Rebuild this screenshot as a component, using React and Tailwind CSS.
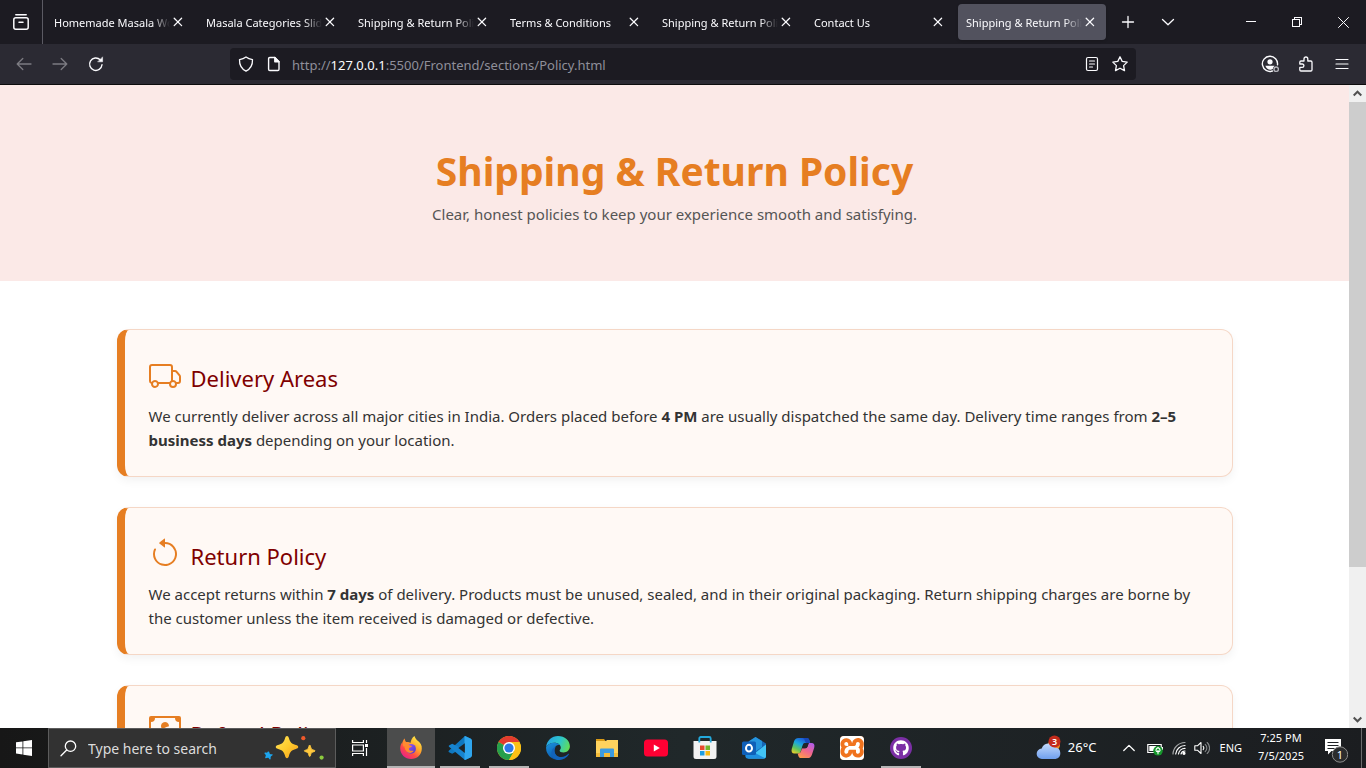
import React from "react";
import { BsTruck, BsArrowCounterclockwise, BsCashCoin } from "react-icons/bs";
import { FaGithub } from "react-icons/fa";
import { SiXampp } from "react-icons/si";

const line = { fill: "none", stroke: "currentColor", strokeLinecap: "round", strokeLinejoin: "round" };

function Icon({ size = 16, box = 16, width = 1.3, children, ...rest }) {
  return (
    <svg width={size} height={size} viewBox={`0 0 ${box} ${box}`} aria-hidden="true" strokeWidth={width} {...line} {...rest}>
      {children}
    </svg>
  );
}

/* ---------- Browser ---------- */

const tabs = [
  "Homemade Masala Wo",
  "Masala Categories Slider",
  "Shipping & Return Policy",
  "Terms & Conditions",
  "Shipping & Return Policy",
  "Contact Us",
  "Shipping & Return Policy",
];

function Tab({ title, active }) {
  return (
    <div className={`flex h-9 w-[148px] shrink-0 items-center rounded pl-2 pr-2 ${active ? "bg-[#52525e] shadow" : ""}`}>
      <a
        href="#tab"
        className="block w-[116px] overflow-hidden whitespace-nowrap pt-0.5 text-[11px] leading-4 text-[#fbfbfe] [mask-image:linear-gradient(to_right,black_calc(100%_-_18px),transparent)]"
      >
        {title}
      </a>
      <button type="button" aria-label={`Close ${title}`} className="flex size-4 items-center justify-center text-[#fbfbfe]">
        <Icon size={10} box={10} width={1.3}><path d="M1.2 1.2l7.4 7.4M8.6 1.2L1.2 8.6" /></Icon>
      </button>
    </div>
  );
}

function TabBar() {
  return (
    <div className="flex h-11 items-center bg-[#1c1b22] text-[#fbfbfe]">
      <button type="button" aria-label="Firefox View" className="flex h-11 w-[42px] shrink-0 items-center justify-center">
        <Icon size={18} box={18} width={1.5}>
          <path d="M3.8 1.8h10.4" />
          <rect x="1.8" y="4.8" width="14.4" height="11.4" rx="2" />
          <path d="M7 9.2h4" />
        </Icon>
      </button>
      <div className="h-11 w-px bg-[#5b5a63]" />
      <nav aria-label="Tabs" className="ml-[3px] flex gap-1">
        {tabs.map((t, i) => <Tab key={i} title={t} active={i === 6} />)}
      </nav>
      <button type="button" aria-label="New tab" className="ml-1.5 flex size-8 shrink-0 items-center justify-center">
        <Icon width={1.3}><path d="M8 2.5v11M2.5 8h11" /></Icon>
      </button>
      <button type="button" aria-label="List all tabs" className="ml-2 flex size-8 shrink-0 items-center justify-center">
        <Icon width={1.3}><path d="M2.5 5.5L8 10.7l5.5-5.2" /></Icon>
      </button>
      <div className="ml-auto flex">
        <button type="button" aria-label="Minimize" className="flex h-11 w-[46px] items-center justify-center">
          <Icon size={10} box={10} width={1} shapeRendering="crispEdges"><path d="M0 4.5h10" /></Icon>
        </button>
        <button type="button" aria-label="Restore" className="flex h-11 w-[46px] items-center justify-center">
          <Icon size={10} box={10} width={1} shapeRendering="crispEdges"><path d="M.5 2.5h7v7h-7zM2.5 2V.5h7v7H8" /></Icon>
        </button>
        <button type="button" aria-label="Close window" className="flex h-11 w-[46px] items-center justify-center">
          <Icon size={11} box={11} width={1}><path d="M.5.5l10 10M10.5.5l-10 10" /></Icon>
        </button>
      </div>
    </div>
  );
}

function ToolButton({ label, dim, children }) {
  return (
    <button type="button" aria-label={label} className={`flex size-8 shrink-0 items-center justify-center ${dim ? "text-[#7c7b82]" : "text-[#fbfbfe]"}`}>
      {children}
    </button>
  );
}

function Toolbar() {
  return (
    <div className="flex h-[41px] items-center border-b border-[#0c0c0d] bg-[#2b2a33] px-2">
      <div className="flex gap-1">
        <ToolButton label="Back" dim><Icon><path d="M15 8H1.2M6.8 2.5L1.2 8l5.6 5.5" /></Icon></ToolButton>
        <ToolButton label="Forward" dim><Icon><path d="M1 8h13.8M9.2 2.5L14.8 8l-5.6 5.5" /></Icon></ToolButton>
        <ToolButton label="Reload">
          <Icon width={1.4}>
            <path d="M14 8.8A6.2 6.2 0 1 1 12.2 3.8" />
            <path d="M14.6 1.2v4.6H10z" fill="currentColor" strokeWidth=".5" />
          </Icon>
        </ToolButton>
      </div>
      <div className="mx-[118px] flex h-8 min-w-0 flex-1 items-center rounded bg-[#1c1b22] text-[#fbfbfe]">
        <button type="button" aria-label="Tracking protection" className="ml-2 flex w-4 justify-center">
          <Icon width={1.3}><path d="M8 1C6 2.6 3.8 3.3 1.5 3.6 1.3 9 3.5 13 8 15.2c4.5-2.2 6.7-6.2 6.5-11.6C12.2 3.3 10 2.6 8 1z" /></Icon>
        </button>
        <button type="button" aria-label="Site information" className="ml-3 flex w-4 justify-center">
          <Icon width={1.4}>
            <path d="M3.8 1.5h5l4.2 4.2v7.6a1.2 1.2 0 0 1-1.2 1.2H3.8a1.2 1.2 0 0 1-1.2-1.2V2.7a1.2 1.2 0 0 1 1.2-1.2z" />
            <path d="M8.8 1.5v4.2H13z" fill="currentColor" />
          </Icon>
        </button>
        <a href="#address" className="ml-2.5 min-w-0 flex-1 truncate pt-0.5 text-[13px] leading-5 text-[#8f8f9a]">
          http://<span className="text-[#fbfbfe]">127.0.0.1</span>:5500/Frontend/sections/Policy.html
        </a>
        <button type="button" aria-label="Reader view" className="mr-3 flex w-4 justify-center">
          <Icon width={1.2}>
            <rect x="2.5" y="1.5" width="11" height="13" rx="1.5" />
            <path d="M5.5 5h5M5.5 8h5M5.5 11h3" />
          </Icon>
        </button>
        <button type="button" aria-label="Bookmark" className="mr-2 flex w-4 justify-center">
          <Icon width={1.3}><path d="M8 .8l2.2 4.6 5 .7-3.6 3.5.9 5L8 12.200l-4.500 2.400.9-5L.8 6.100l5-.7z" /></Icon>
        </button>
      </div>
      <div className="flex gap-1">
        <ToolButton label="Account">
          <Icon size={18} box={18} width={1.4}>
            <path d="M11.5 16A7.6 7.6 0 1 1 16.5 9.800" />
            <circle cx="9" cy="6.8" r="2.6" fill="currentColor" stroke="none" />
            <path d="M4.3 10.7h9.2c-.5 1-1.600 1.500-1.700 3.300-2.500 1.500-6 .8-7.500-3.300z" fill="currentColor" stroke="none" />
            <circle cx="15.2" cy="14.2" r="2.200" className="text-[#b4b4bb]" />
          </Icon>
        </ToolButton>
        <ToolButton label="Extensions">
          <Icon width={1.3}><path d="M6 5V2.900a1.900 1.900 0 0 1 3.800 0V5h3a1.200 1.200 0 0 1 1.200 1.200v7.600a1.200 1.200 0 0 1-1.200 1.200H3a1.200 1.200 0 0 1-1.200-1.200v-2.400h2.400a1.700 1.700 0 0 0 0-3.400H1.800V6.200A1.200 1.200 0 0 1 3 5z" /></Icon>
        </ToolButton>
        <ToolButton label="Menu"><Icon width={1.2}><path d="M2 3.5h12M2 8h12M2 12.5h12" /></Icon></ToolButton>
      </div>
    </div>
  );
}

/* ---------- Page ---------- */

function PolicyCard({ icon: Glyph, title, children }) {
  return (
    <section className="rounded-xl border border-l-8 border-[#f5d7c6] border-l-[#e67e22] bg-[#fff9f5] p-6 shadow-[0_4px_10px_rgba(0,0,0,0.05)]">
      <h2 className="mb-2 flex h-[42px] items-end gap-2.5 pb-1 text-[22px] leading-[27px] text-[#800000]">
        <Glyph className="size-8 shrink-0 text-[#e67e22]" aria-hidden="true" />
        {title}
      </h2>
      <p className="text-[15px] leading-6 text-[#333]">{children}</p>
    </section>
  );
}

function PolicyPage() {
  return (
    <main className="min-w-0 flex-1 overflow-hidden bg-white">
      <header className="bg-[#fbe9e7] pb-[55px] pt-[63px] text-center">
        <h1 className="text-[39px] font-bold leading-[46px] text-[#e67e22]">Shipping &amp; Return Policy</h1>
        <p className="mt-2 text-[15px] leading-6 text-[#555]">Clear, honest policies to keep your experience smooth and satisfying.</p>
      </header>
      <div className="mx-auto flex max-w-[1140px] flex-col gap-[30px] px-3 py-12">
        <PolicyCard icon={BsTruck} title="Delivery Areas">
          We currently deliver across all major cities in India. Orders placed before <strong>4 PM</strong> are usually dispatched the same day. Delivery time ranges from <strong>2–5 business days</strong> depending on your location.
        </PolicyCard>
        <PolicyCard icon={BsArrowCounterclockwise} title="Return Policy">
          We accept returns within <strong>7 days</strong> of delivery. Products must be unused, sealed, and in their original packaging. Return shipping charges are borne by the customer unless the item received is damaged or defective.
        </PolicyCard>
        <PolicyCard icon={BsCashCoin} title="Refund Policy" />
      </div>
    </main>
  );
}

function Scrollbar() {
  return (
    <div className="flex w-[17px] shrink-0 flex-col bg-[#f0f0f0] text-[#505050]">
      <button type="button" aria-label="Scroll up" className="flex h-[17px] items-center justify-center">
        <Icon size={9} box={9} width={2} strokeLinecap="butt" strokeLinejoin="miter"><path d="M.7 6.5l3.8-3.8 3.8 3.8" /></Icon>
      </button>
      <div className="flex flex-1 flex-col">
        <div className="flex-[465] bg-[#cdcdcd]" />
        <div className="flex-[144]" />
      </div>
      <button type="button" aria-label="Scroll down" className="flex h-[17px] items-center justify-center">
        <Icon size={9} box={9} width={2} strokeLinecap="butt" strokeLinejoin="miter"><path d="M.7 2.5l3.8 3.8 3.8-3.8" /></Icon>
      </button>
    </div>
  );
}

/* ---------- Taskbar ---------- */

function Art({ children, size = 24 }) {
  return <svg width={size} height={size} viewBox="0 0 24 24" aria-hidden="true">{children}</svg>;
}

const Firefox = () => (
  <Art>
    <defs>
      <linearGradient id="fxBody" x1=".85" y1=".05" x2=".2" y2=".95"><stop offset="0" stopColor="#fff04a" /><stop offset=".4" stopColor="#ffa72b" /><stop offset=".7" stopColor="#ff4a45" /><stop offset="1" stopColor="#e8208a" /></linearGradient>
      <linearGradient id="fxGlobe" x1="0" y1="0" x2="1" y2="1"><stop offset="0" stopColor="#a158ff" /><stop offset="1" stopColor="#4a3cc4" /></linearGradient>
    </defs>
    <path d="M15.5 0c.6 1.800 1.300 2.900 2.600 4.200 3.200 2.300 5 5 4.700 8.500C22.600 19 18 23 12.200 23 6 23 1.200 18.500 1.200 12.300c0-2.700 1-4.900 2.300-6.400l.3 2C4.300 6 4.600 3.800 5.400 2.600c0 1.600.6 2.900 1.400 3.500 1.500-.4 3-.3 4.600.9.600-2.700 1.700-5.500 4.100-7z" fill="url(#fxBody)" />
    <circle cx="12" cy="12.8" r="4.9" fill="url(#fxGlobe)" />
    <path d="M5.400 8.800c2-1 4.400-.6 5.400.6 1 .1 1.900.3 2.300.7-.5 1.300-2 1.300-2.800 2-.7.7-.5 1.900.6 2.400 1.300.6 2.500-.2 3.800.3-1 1.900-3.400 2.600-5.500 1.700C6.500 15.200 5 12 5.400 8.800z" fill="#ff8a2c" />
    <path d="M3.500 6L5.400 2.600l1.400 3.500 4.100.7-2 2.700-4.600 1z" fill="#ff8a32" />
  </Art>
);

const VsCode = () => (
  <Art>
    <path d="M17 0l5.900 2.800V7L4.200 17.700 1 16.200c-.7-.6-.6-1.200 0-1.700z" fill="#0f78c0" />
    <path d="M1 9.500l3.200-1.700L22.900 17v4.200L17 24 1 10.700c-.4-.4-.4-.8 0-1.200z" fill="#1784cf" />
    <path d="M17 0l5.900 2.800q1.100.5 1.100 1.600v15.200q0 1.100-1.100 1.600L17 24c-.8-.4-.5-.5-.5-1.200V1.200C16.500.5 16.300.3 17 0z" fill="#2fa6ee" />
    <path d="M16.800 7.200v9.700L10.400 12z" fill="#1f2325" />
  </Art>
);

const Chrome = () => (
  <Art>
    <circle cx="12" cy="12" r="12" fill="#fbc116" />
    <path d="M12 12L1.600 6A12 12 0 0 1 22.400 6H12z" fill="#e33b2e" />
    <path d="M12 12L1.600 6A12 12 0 0 0 12 24l5.200-9z" fill="#269f4c" />
    <path d="M12 6h10.400A12 12 0 0 1 12 24l5.200-9z" fill="#fbc116" />
    <circle cx="12" cy="12" r="6" fill="#fff" />
    <circle cx="12" cy="12" r="4.6" fill="#2d78e8" />
  </Art>
);

const Edge = () => (
  <Art>
    <defs>
      <linearGradient id="edgeTop" x1="0" y1=".3" x2="1" y2=".6"><stop offset="0" stopColor="#25a4e6" /><stop offset=".55" stopColor="#2ec7c9" /><stop offset="1" stopColor="#62dd55" /></linearGradient>
      <linearGradient id="edgeLow" x1="0" y1="0" x2=".5" y2="1"><stop offset="0" stopColor="#1b93dd" /><stop offset="1" stopColor="#0a57ad" /></linearGradient>
    </defs>
    <path d="M.1 11.200C.8 4.600 5.900.1 12 .1c6.800 0 11.900 4.600 11.900 10.200 0 3.700-2.900 6.200-6.300 6.200-2.700 0-4-.9-4-1.700 0-.7 1.200-1.200 1.200-3.200 0-2.500-2.600-4.800-6.500-4.800-3.600 0-6.700 1.700-8.200 4.400z" fill="url(#edgeTop)" />
    <path d="M.1 11.200c1.500-3 4.600-4.500 8-4.500 2.300 0 4.300.8 5.500 2.100-4 .1-5.500 3.300-5.200 6.100.4 4.100 3.700 7.800 8 8.200A12 12 0 0 1 .1 11.200z" fill="url(#edgeLow)" />
    <path d="M9.600 11c-3 4.800.3 10 5.700 10 3 0 5.300-1.200 7.100-3.200.4-.3.8 0 .5.500-2.300 4-6.700 6.200-11.300 5.600-4.500-.8-7.300-5-5.900-8.900.7-2 2.200-3.500 3.900-4z" fill="#1263bb" />
  </Art>
);

const Explorer = () => (
  <Art>
    <path d="M1 3h8l2 2.500H1z" fill="#d99a16" />
    <path d="M1 5h10l1-1h11v17H1z" fill="#ffd35e" />
    <path d="M1 17h22v4H1z" fill="#f4bc3a" />
    <path d="M5 21v-7.500a1 1 0 0 1 1-1h12a1 1 0 0 1 1 1V21h-4v-4H9v4z" fill="#3c9be0" />
  </Art>
);

const YouTube = () => (
  <Art>
    <rect x="0" y="3.5" width="24" height="17" rx="3.5" fill="#ff0033" />
    <path d="M9.800 8.500v7l6-3.500z" fill="#fff" />
  </Art>
);

const Store = () => (
  <Art>
    <path d="M.5 5h23v15.500a2.500 2.500 0 0 1-2.500 2.500H3A2.500 2.500 0 0 1 .5 20.500z" fill="#f2f2f2" />
    <path d="M6.300 6.500V2.500A1.500 1.500 0 0 1 7.800 1h8.400a1.500 1.500 0 0 1 1.500 1.500v4" fill="none" stroke="#23a9dc" strokeWidth="1.800" />
    <path d="M7 9.500h4.500V14H7z" fill="#e8492e" /><path d="M12.500 9.500H17V14h-4.500z" fill="#75b52b" />
    <path d="M7 15h4.500v4.500H7z" fill="#1e9de0" /><path d="M12.500 15H17v4.500h-4.500z" fill="#f8b912" />
  </Art>
);

const Outlook = () => (
  <Art>
    <path d="M3.500 7.500L13.500 1 24 7.500V20a2.500 2.500 0 0 1-2.500 2.500H6A2.500 2.500 0 0 1 3.500 20z" fill="#1665b5" />
    <path d="M7 5.200l6.500-4.200L20 5v6l-6 4-7-2z" fill="#2594dd" />
    <path d="M24 8.500V20a2.500 2.500 0 0 1-2.500 2.500H6z" fill="#42c4f5" />
    <path d="M4 12l19 10.200c-.5.200-1 .3-1.500.3H6A2.500 2.500 0 0 1 3.500 20z" fill="#1e8ee0" />
    <rect x="0" y="5.500" width="14" height="13.500" rx="1.500" fill="#0f5fb8" />
    <ellipse cx="7" cy="12.200" rx="3" ry="3.400" fill="none" stroke="#fff" strokeWidth="2" />
  </Art>
);

const Copilot = () => (
  <Art>
    <defs>
      <linearGradient id="cpA" x1=".7" y1="0" x2=".1" y2="1"><stop offset="0" stopColor="#1c4fd6" /><stop offset=".4" stopColor="#1aa6e0" /><stop offset=".7" stopColor="#5fc45c" /><stop offset="1" stopColor="#f5cf27" /></linearGradient>
      <linearGradient id="cpB" x1=".8" y1="0" x2=".2" y2="1"><stop offset="0" stopColor="#b25ce8" /><stop offset=".5" stopColor="#f0668e" /><stop offset="1" stopColor="#ff9a4a" /></linearGradient>
    </defs>
    <path d="M7.500 2h8.200c1.500 0 2.200.9 2.700 2.300l.8 2.700h-5c-1.400 0-2 .8-2.500 2.200l-2 6.100c-.6 1.700-1.300 2.200-3 2.200H3.500C1 17.500 0 15.500.8 12.700L3 5.600C3.800 3.200 5 2 7.500 2z" fill="url(#cpA)" />
    <path d="M16.500 22H10c-1.500 0-2.200-.9-2.700-2.300l-.6-2.200c1.900 0 2.700-.5 3.300-2.200l1-3h3c1.400 0 2.200-.8 2.700-2.200L17.700 7h2.800c2.500 0 3.500 2 2.700 4.800L21 18.400c-.8 2.400-2 3.600-4.500 3.600z" fill="url(#cpB)" />
    <path d="M11 12.300l1-3.100c.5-1.500 1.200-2.200 2.500-2.200h3.200l-1 3c-.5 1.500-1.300 2.300-2.700 2.300z" fill="#20262a" />
    <path d="M12 2h3.700c1.500 0 2.200.9 2.700 2.300l.8 2.700h-3.900c-1.300-.3-1-3.500-3.300-5z" fill="#1747b8" />
  </Art>
);

const Xampp = () => (
  <span className="flex size-6 items-center justify-center overflow-hidden rounded-sm bg-[#f0731e]"><SiXampp className="size-8 shrink-0 text-white" aria-hidden="true" /></span>
);

const GitHub = () => (
  <span className="flex size-[22px] items-center justify-center rounded-full bg-[#7b2fa5]"><FaGithub className="size-4 text-white" aria-hidden="true" /></span>
);

const apps = [
  ["Firefox", Firefox, "active"], ["Visual Studio Code", VsCode, "open"], ["Chrome", Chrome, "open"], ["Edge", Edge, ""],
  ["File Explorer", Explorer, ""], ["YouTube", YouTube, ""], ["Microsoft Store", Store, ""], ["Outlook", Outlook, ""],
  ["Copilot", Copilot, ""], ["XAMPP", Xampp, ""], ["GitHub Desktop", GitHub, "open"],
];

function AppButton({ label, art: Glyph, state }) {
  return (
    <button type="button" aria-label={label} className={`flex h-10 w-12 shrink-0 flex-col items-center justify-between pt-2 ${state === "active" ? "bg-[#4b4c4c]" : ""}`}>
      <span className="flex h-6 items-center"><Glyph /></span>
      <span className={`h-0.5 ${state === "active" ? "w-12 bg-[#b5b5b5]" : state === "open" ? "w-10 bg-[#b5b5b5]" : "w-0"}`} />
    </button>
  );
}

function Sparkles() {
  return (
    <svg width="62" height="26" viewBox="0 0 62 26" aria-hidden="true">
      <defs><linearGradient id="spark" x1="0" y1="0" x2="1" y2="1"><stop offset="0" stopColor="#ffe45c" /><stop offset=".5" stopColor="#ffcb2d" /><stop offset="1" stopColor="#f39a1c" /></linearGradient></defs>
      <path d="M24 1c1 0 1.500.7 1.900 2 1.200 4.300 2.700 5.800 7 7.100 1.500.5 2.300.9 2.300 1.900s-.8 1.500-2.300 2c-4.300 1.200-5.800 2.700-7 7-.4 1.400-.9 2.200-1.900 2.200s-1.500-.8-1.900-2.200c-1.200-4.300-2.700-5.800-7-7-1.500-.5-2.300-1-2.300-2s.8-1.400 2.300-1.900c4.300-1.300 5.800-2.800 7-7.100.4-1.300.9-2 1.900-2z" fill="url(#spark)" />
      <path d="M46.700 10c.7 0 .9 3.300 2 4.200 1 .9 3.400 1 3.400 1.700s-2.400.8-3.400 1.700c-1.100.9-1.300 3.900-2 3.900s-.9-3-2-3.900c-1-.9-3.400-1-3.400-1.700s2.400-.8 3.400-1.700c1.100-.9 1.300-4.200 2-4.200z" fill="#ffc83d" stroke="#ffc83d" />
      <path d="M5.500 16.500c1 0 .8 2 1.600 2.500s2.500-.2 2.600.7-1.700 1.100-2 2c-.3.900.4 2.400-.5 2.700s-1.200-1.400-2.100-1.600c-.9-.2-2.200 1-2.800.2s.7-1.900.5-2.800-1.700-1.400-1.300-2.200 1.900-.1 2.600-.5 .5-1 1.400-1z" fill="#1ca5ee" />
      <circle cx="40.3" cy="3.2" r="2.1" fill="#f0592b" />
      <circle cx="58.6" cy="22.6" r="2.1" fill="#8ccb3e" />
    </svg>
  );
}

function Tray() {
  return (
    <div className="ml-auto flex h-10 shrink-0 items-center text-white">
      <button type="button" className="flex items-center gap-1.5 text-[13px]">
        <svg width="26" height="26" viewBox="0 0 26 26" aria-hidden="true">
          <defs><linearGradient id="cloud" x1="0" y1="0" x2="0" y2="1"><stop offset="0" stopColor="#c3dafc" /><stop offset="1" stopColor="#6f9fee" /></linearGradient></defs>
          <circle cx="18" cy="10" r="6" fill="#f28a1c" />
          <path d="M6 24a5.200 5.200 0 0 1-.3-10.400A7.200 7.200 0 0 1 19 12.500a5.800 5.800 0 0 1 .5 11.500z" fill="url(#cloud)" />
          <circle cx="18.500" cy="6.500" r="6" fill="#c42b1c" />
          <text x="18.500" y="10" textAnchor="middle" fontSize="9" fontWeight="600" fill="#fff">3</text>
        </svg>
        26°C
      </button>
      <button type="button" aria-label="Show hidden icons" className="ml-[26px] flex"><Icon size={12} box={12} width={1.3}><path d="M.8 8.500L6 3.400l5.200 5.100" /></Icon></button>
      <button type="button" aria-label="Battery" className="ml-3 flex">
        <svg width="17" height="16" viewBox="0 0 17 16" aria-hidden="true">
          <path d="M.8 4.500h13.400v8H.8z" fill="none" stroke="#fff" strokeWidth="1.200" /><path d="M14.500 7h1.500v3h-1.500z" fill="#fff" /><path d="M2.300 6h7v5h-7z" fill="#fff" />
          <circle cx="11" cy="10.800" r="4.800" fill="#15962b" />
          <path d="M11 7.500c3 1.800 2.600 4.200 0 4.500-2.600-.3-3-2.700 0-4.500zM11 10v4.200" fill="none" stroke="#fff" strokeWidth="1.100" />
        </svg>
      </button>
      <button type="button" aria-label="Network" className="ml-2 flex">
        <Icon size={14} box={14} width={1.2}>
          <path d="M1 13A12 12 0 0 1 13 1.500" className="text-[#a7a9aa]" /><path d="M3.700 13A9.300 9.300 0 0 1 13 4.500M6.500 13A6.600 6.600 0 0 1 13 7.400" /><path d="M9 13a4 4 0 0 1 4-3" />
          <circle cx="12" cy="12.300" r="1" fill="currentColor" />
        </Icon>
      </button>
      <button type="button" aria-label="Volume" className="ml-2 flex">
        <Icon size={16} box={16} width={1.1}><path d="M.8 5.800h2.600L7 2.500v11L3.400 10.200H.8zM9.200 6.300a2.600 2.600 0 0 1 0 3.400" /><path d="M11.200 4.300a5 5 0 0 1 0 7.400M13.200 2.500a7.600 7.600 0 0 1 0 11" className="text-[#85888a]" /></Icon>
      </button>
      <button type="button" className="ml-2.5 text-[11px] leading-4">ENG</button>
      <button type="button" className="ml-3.5 w-[50px] pb-0.5 text-center text-[11px] leading-[18px]">
        <span className="block">7:25 PM</span><span className="block">7/5/2025</span>
      </button>
      <button type="button" aria-label="Notifications" className="ml-4 flex pt-1">
        <svg width="26" height="26" viewBox="0 0 26 26" aria-hidden="true">
          <path d="M3 2h16v12H9.500L6 17.500V14H3z" fill="#fff" /><path d="M5.500 5.500h11M5.500 8.500h11M5.500 11.500h7" stroke="#202326" strokeWidth="1.200" />
          <circle cx="18" cy="17.500" r="7.700" fill="#2b2c2d" stroke="#8b8b8b" strokeWidth="1" />
          <text x="18" y="21.500" textAnchor="middle" fontSize="11" fill="#fff">1</text>
        </svg>
      </button>
      <div className="ml-[13px] mr-1 h-10 w-px bg-[#6a6b6c]" />
    </div>
  );
}

function Taskbar() {
  return (
    <footer className="flex h-10 shrink-0 items-center bg-linear-to-r from-[#171717] via-[#20282a] to-[#1b1d20]">
      <button type="button" aria-label="Start" className="flex h-10 w-12 shrink-0 items-center justify-center">
        <svg width="16" height="16" viewBox="0 0 16 16" fill="#fff" aria-hidden="true"><path d="M0 2.300l6.500-.9v6.100H0zM7.300 1.300L16 0v7.500H7.300zM0 8.300h6.500v6.200L0 13.600zM7.300 8.300H16V16l-8.700-1.300z" /></svg>
      </button>
      <label className="flex h-10 w-72 shrink-0 items-center border border-[#5c5c5c] bg-[#323232] pl-[11px] pr-2.5 text-white">
        <Icon size={17} box={17} width={1.3}><circle cx="10.500" cy="6.200" r="5.200" /><path d="M6.700 10L1 15.800" /></Icon>
        <input type="text" aria-label="Search" placeholder="Type here to search" className="ml-[11px] min-w-0 flex-1 bg-transparent text-[14px] text-white outline-none placeholder:text-[#dcdcdc]" />
        <Sparkles />
      </label>
      <button type="button" aria-label="Task view" className="mr-[3px] flex h-10 w-12 shrink-0 items-center justify-center text-white">
        <Icon size={16} box={16} width={1.2} strokeLinecap="butt" strokeLinejoin="miter">
          <path d="M.6 0v2.500h10.800V0M.6 16v-2.500h10.800V16M.6 5h10.800v6H.6zM14.500 0v3M14.500 8v8" /><path d="M13 4h3v3h-3z" fill="currentColor" stroke="none" />
        </Icon>
      </button>
      <div className="flex gap-px">
        {apps.map(([label, art, state]) => <AppButton key={label} label={label} art={art} state={state} />)}
      </div>
      <Tray />
    </footer>
  );
}

export default function App() {
  return (
    <div className="flex h-screen flex-col overflow-hidden font-['Noto_Sans','Open_Sans',sans-serif]">
      <TabBar />
      <Toolbar />
      <div className="flex min-h-0 flex-1">
        <PolicyPage />
        <Scrollbar />
      </div>
      <Taskbar />
    </div>
  );
}
